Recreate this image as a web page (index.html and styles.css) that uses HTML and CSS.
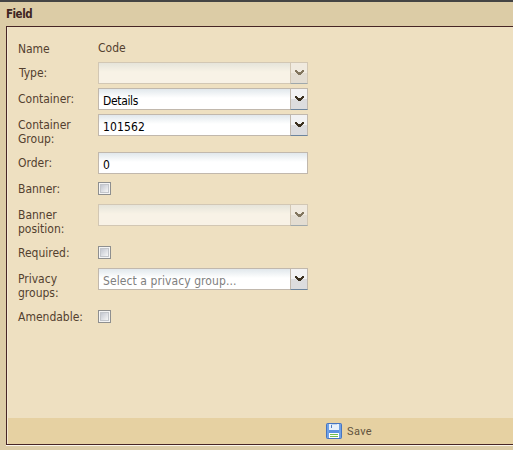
FILE: index.html
```html
<!DOCTYPE html>
<html lang="en">
<head>
<meta charset="utf-8">
<title>Field</title>
<link rel="stylesheet" href="styles.css">
</head>
<body>
<svg class="defs" width="0" height="0" aria-hidden="true">
<symbol id="arrow" viewBox="0 0 9 5" shape-rendering="crispEdges"><path d="M0 0h2v1h1v1h3v-1h1v-1h2v1h0v1h-1v1h-1v1h-1v1h-3v-1h-1v-1h-1v-1h-1z"/></symbol>
</svg>
<header class="title">Field</header>
<main class="panel">
<form class="form">
<div class="row name"><span class="label">Name</span><span class="value">Code</span></div>
<div class="row"><span class="label type">Type:</span><div class="combo disabled"><span class="text"></span><span class="trigger"><svg><use href="#arrow"/></svg></span></div></div>
<div class="row"><span class="label">Container:</span><div class="combo"><span class="text details">Details</span><span class="trigger"><svg><use href="#arrow"/></svg></span></div></div>
<div class="row tall"><span class="label">Container Group:</span><div class="combo"><span class="text number">101562</span><span class="trigger"><svg><use href="#arrow"/></svg></span></div></div>
<div class="row"><span class="label">Order:</span><div class="combo"><span class="text plain">0</span></div></div>
<div class="row"><span class="label">Banner:</span><span class="check"></span></div>
<div class="row tall"><span class="label">Banner position:</span><div class="combo disabled"><span class="text"></span><span class="trigger"><svg><use href="#arrow"/></svg></span></div></div>
<div class="row"><span class="label">Required:</span><span class="check"></span></div>
<div class="row tall"><span class="label">Privacy groups:</span><div class="combo"><span class="text hint">Select a privacy group...</span><span class="trigger"><svg><use href="#arrow"/></svg></span></div></div>
<div class="row"><span class="label amend">Amendable:</span><span class="check"></span></div>
</form>
<footer class="toolbar">
<svg class="disk" width="16" height="16" viewBox="0 0 16 16"><rect x=".5" y=".5" width="15" height="15" rx="1" fill="#5b91df" stroke="#4674c0"/><path d="M2 1v14M14 1v14" stroke="#83b0ed"/><path d="M3 1h10v6H3z" fill="#e8f1fb"/><path d="M5 1h6v1H5z" fill="#bfd5ef"/><path d="M5 2h1v3H5z" fill="#527fc0"/><path d="M3 10h10v5H3z" fill="#fff"/><path d="M4 11h8v1H4zM4 13h8v1H4z" fill="#72bd4d"/></svg>
<span>Save</span>
</footer>
</main>
</body>
</html>
```
FILE: styles.css
```css
* { box-sizing: border-box; }
body {
  margin: 0;
  height: 450px;
  overflow: hidden;
  display: flex;
  flex-direction: column;
  padding: 0 0 5px 6px;
  border-top: 2px solid #444;
  background: #dccca6;
  color: #533f2f;
  font: 12px/14px "DejaVu Sans Condensed", "DejaVu Sans", sans-serif;
}
.defs { position: absolute; }
.title {
  height: 24px;
  padding-top: 5px;
  color: #3f2522;
  font-weight: bold;
  font-size: 11.5px;
  letter-spacing: -0.5px;
}
.panel {
  flex: 1;
  display: flex;
  flex-direction: column;
  border: 1px solid #462525;
  border-right: 0;
  background: #eee0c1;
  box-shadow: 0 1px #faf5e9, inset 1px 0 #f3e9d3;
}
.form { flex: 1; padding: 11px 0 0 11px; }
.row { display: flex; height: 26px; }
.row.tall { height: 38px; }
.row.name { height: 24px; }
.label { width: 80px; padding: 4px 14px 0 0; }
.name .label { letter-spacing: -0.1px; }
.value { padding-top: 3px; }
.type { padding-left: 1px; }
.amend { padding-right: 0; }
.combo { display: flex; width: 210px; height: 22px; }
.text {
  flex: 1;
  padding: 5px 0 0 4px;
  border: 1px solid #c1b8ad;
  border-right: 0;
  background: linear-gradient(#e1e8ec, #fff 9px);
  color: #000;
  white-space: nowrap;
}
.details { letter-spacing: -0.35px; }
.number { letter-spacing: 0.15px; }
.plain { border-right: 1px solid #c1b8ad; }
.hint { color: #808080; letter-spacing: 0.08px; }
.trigger {
  width: 18px;
  padding: 7px 0 0 4px;
  border: 1px solid #c1b8ad;
  border-bottom-color: #6c849d;
  background: linear-gradient(#f2f2f3 0 50%, #dcdcde 50%);
}
.trigger svg { display: block; width: 9px; height: 5px; fill: #3b301f; }
.disabled { opacity: .6; }
.check {
  width: 13px;
  height: 13px;
  margin-top: 4px;
  border: 1px solid #8e8f8f;
  background: linear-gradient(135deg, #c3c7d0, #f6f6f6) center / 7px 7px no-repeat, #f4f4f4;
  outline: 1px solid #c3c6cb;
  outline-offset: -3px;
}
.toolbar {
  display: flex;
  height: 26px;
  margin-left: 1px;
  padding: 5px 0 0 318px;
  gap: 5px;
  background: #e6d1a2;
  color: #62533d;
  font: 11px/18px Roboto, "Liberation Sans", sans-serif;
  letter-spacing: .35px;
}
```
